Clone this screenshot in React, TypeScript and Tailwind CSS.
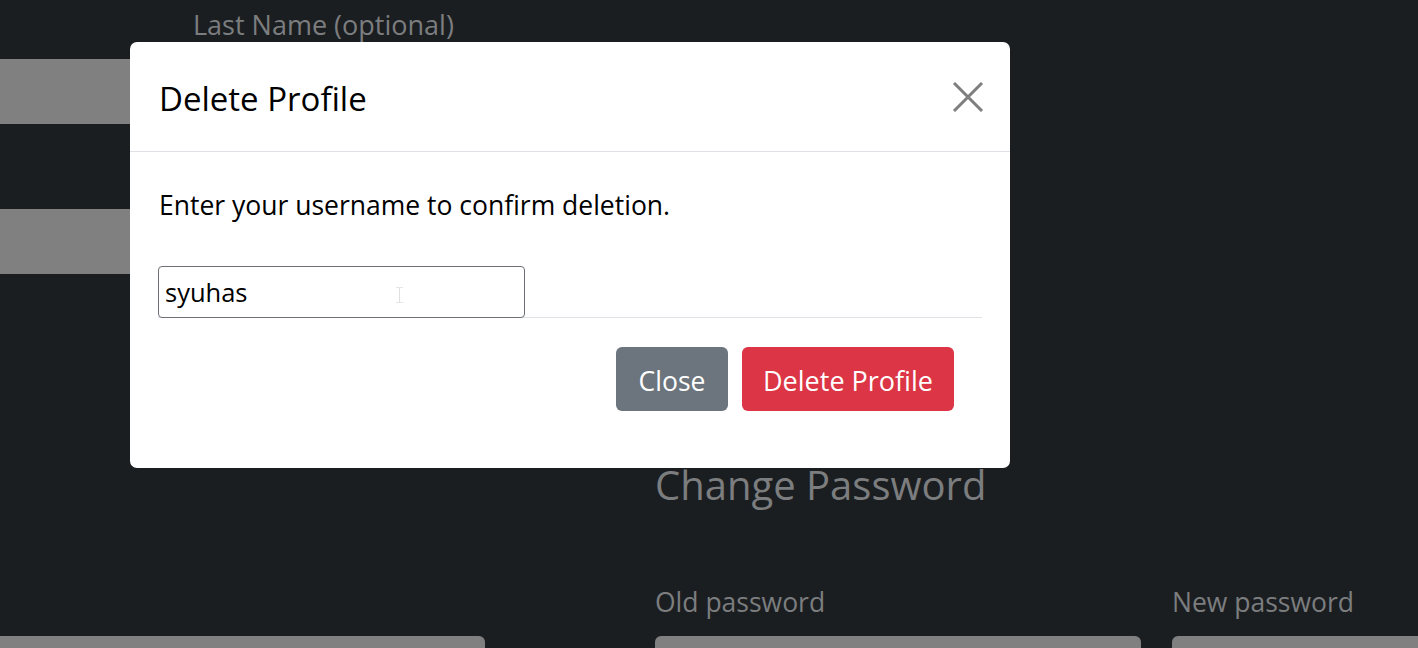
import React from 'react';

const font = { fontFamily: '"Open Sans", "Noto Sans", sans-serif' };

const App: React.FC = () => {
  return (
    <div className="relative w-full h-[648px] overflow-hidden bg-[#1b1e21] font-['Open_Sans',_'Noto_Sans',_sans-serif]">
      {/* page behind the dialog (already dimmed) */}
      <div className="flex flex-col">
        <div className="pl-[193px] pt-[6px] h-[59px] text-[27px] leading-[38px] text-[#7b7d7f]">Last Name (optional)</div>
        <div className="h-[65px] w-[600px] bg-[#808080]" />
        <div className="h-[85px]" />
        <div className="h-[65px] w-[600px] bg-[#808080]" />
        <div className="pl-[655px] pt-[183px] text-[40px] leading-[56px] text-[#7b7d7f]">Change Password</div>
        <div className="flex pl-[655px] mt-[71px] text-[26.5px] leading-[36px] text-[#7b7d7f]">
          <div className="w-[517px]">Old password</div>
          <div>New password</div>
        </div>
        <div className="flex mt-[16px] h-[40px]">
          <div className="w-[485px] bg-[#808080] rounded-tr-[6px]" />
          <div className="w-[486px] ml-[170px] bg-[#808080] rounded-t-[6px]" />
          <div className="flex-1 ml-[31px] bg-[#808080] rounded-tl-[6px]" />
        </div>
      </div>

      {/* dialog */}
      <div className="absolute left-[130px] top-[42px] w-[880px] h-[426px] bg-white rounded-[7px] flex flex-col" style={font}>
        <div className="h-[110px] border-b border-[#dee2e6] flex items-center justify-between pl-[29px] pr-[26px]">
          <h5 className="text-[33px] leading-[40px] text-black pt-[4px]">Delete Profile</h5>
          <svg width="32" height="30" viewBox="0 0 32 30" className="mt-[0px]">
            <path d="M2 1 L30 29 M30 1 L2 29" stroke="#7f7f7f" strokeWidth="3" fill="none" />
          </svg>
        </div>
        <div className="px-[28px] pt-[36px] flex flex-col">
          <p className="text-[26.5px] leading-[34px] text-black pl-[1px]">Enter your username to confirm deletion.</p>
          <div className="mt-[44px] border-b border-[#dee2e6] flex">
            <div className="relative w-[367px] h-[52px] border border-[#6c6f75] rounded-[4px] flex items-center pl-[6px] text-[25.5px] text-black mb-[-1px]">
              syuhas
              <span className="absolute left-[240px] top-[20px] w-[1px] h-[15px] bg-[#e0e0e0]" />
              <span className="absolute left-[237px] top-[20px] w-[7px] h-[1px] bg-[#e6e6e6]" />
              <span className="absolute left-[237px] top-[35px] w-[7px] h-[1px] bg-[#e6e6e6]" />
            </div>
          </div>
          <div className="flex justify-end gap-[14px] pr-[28px] mt-[29px]">
            <button className="h-[64px] w-[112px] pt-[5px] rounded-[6px] bg-[#6c757d] text-white text-[26.5px]">Close</button>
            <button className="h-[64px] w-[212px] pt-[5px] rounded-[6px] bg-[#dc3545] text-white text-[27px]">Delete Profile</button>
          </div>
        </div>
      </div>
    </div>
  );
};

export default App;
